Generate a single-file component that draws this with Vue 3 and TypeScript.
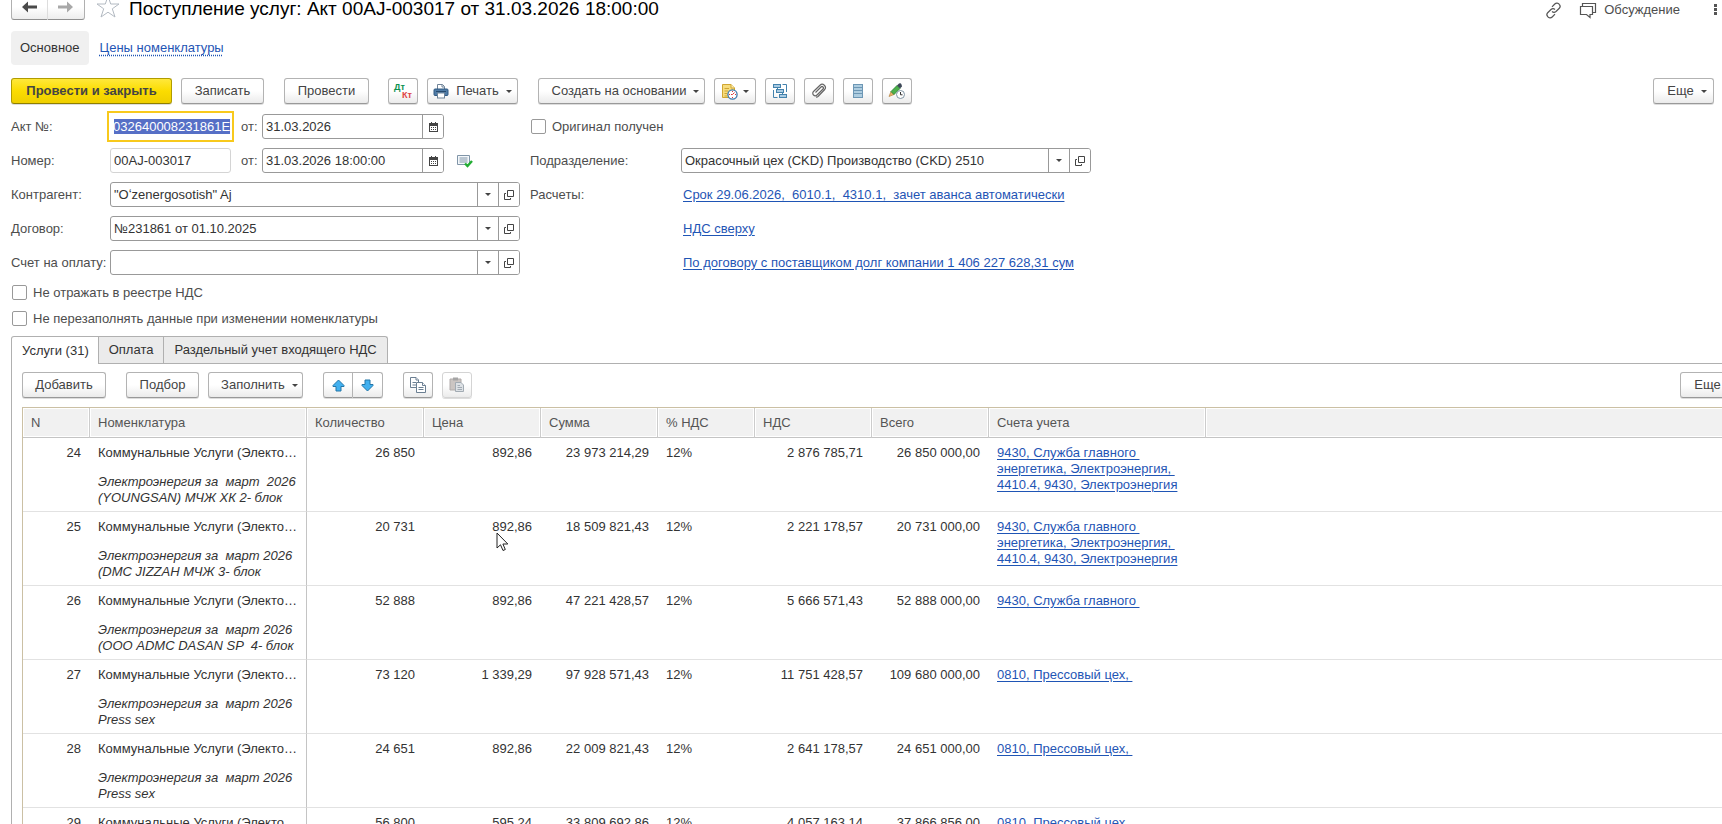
<script setup lang="ts">
import { onMounted, ref } from 'vue'

interface Row {
  n: number
  note: string[]
  qty: string
  price: string
  sum: string
  vat: string
  total: string
  accounts: string[]
}

const energyAccounts = ['9430, Служба главного ', 'энергетика, Электроэнергия, ', '4410.4, 9430, Электроэнергия']

const rows: Row[] = [
  { n: 24, note: ['Электроэнергия за  март  2026', '(YOUNGSAN) МЧЖ ХК 2- блок'], qty: '26 850', price: '892,86', sum: '23 973 214,29', vat: '2 876 785,71', total: '26 850 000,00', accounts: energyAccounts },
  { n: 25, note: ['Электроэнергия за  март 2026', '(DMC JIZZAH МЧЖ 3- блок'], qty: '20 731', price: '892,86', sum: '18 509 821,43', vat: '2 221 178,57', total: '20 731 000,00', accounts: energyAccounts },
  { n: 26, note: ['Электроэнергия за  март 2026', '(ООО ADMC DASAN SP  4- блок'], qty: '52 888', price: '892,86', sum: '47 221 428,57', vat: '5 666 571,43', total: '52 888 000,00', accounts: ['9430, Служба главного '] },
  { n: 27, note: ['Электроэнергия за  март 2026', 'Press sex'], qty: '73 120', price: '1 339,29', sum: '97 928 571,43', vat: '11 751 428,57', total: '109 680 000,00', accounts: ['0810, Прессовый цех, '] },
  { n: 28, note: ['Электроэнергия за  март 2026', 'Press sex'], qty: '24 651', price: '892,86', sum: '22 009 821,43', vat: '2 641 178,57', total: '24 651 000,00', accounts: ['0810, Прессовый цех, '] },
  { n: 29, note: ['Электроэнергия за  март 2026', 'Press sex'], qty: '56 800', price: '595,24', sum: '33 809 692,86', vat: '4 057 163,14', total: '37 866 856,00', accounts: ['0810, Прессовый цех, '] },
]

const actNumber = ref('032640008231861E')
const docNumber = ref('00AJ-003017')
const actDate = ref('31.03.2026')
const docDate = ref('31.03.2026 18:00:00')
const department = ref('Окрасочный цех (CKD) Производство (CKD) 2510')

const lookups = ref([
  { id: 'partner', label: 'Контрагент:', value: '"Oʻzenergosotish" Aj' },
  { id: 'contract', label: 'Договор:', value: '№231861 от 01.10.2025' },
  { id: 'invoice', label: 'Счет на оплату:', value: '' },
])
const links = [
  { label: 'Расчеты:', text: 'Срок 29.06.2026,  6010.1,  4310.1,  зачет аванса автоматически' },
  { label: '', text: 'НДС сверху' },
  { label: '', text: 'По договору с поставщиком долг компании 1 406 227 628,31 сум' },
]

const actInput = ref<HTMLInputElement | null>(null)
onMounted(() => {
  actInput.value?.focus()
  actInput.value?.select()
})
</script>

<template>
  <main class="page">
    <header class="head">
      <div class="nav">
        <button type="button" aria-label="Назад">
          <svg width="16" height="12" viewBox="0 0 16 12"><path d="M0 6 6 .5V4.500H15V7.500H6V11.500Z" fill="#4a4a4a" /></svg>
        </button>
        <button type="button" aria-label="Вперед">
          <svg width="16" height="12" viewBox="0 0 16 12"><path d="M15 6 9 .5V4.500H0V7.500H9V11.500Z" fill="#a8a8a8" /></svg>
        </button>
      </div>
      <button type="button" class="bare star" aria-label="Избранное">
        <svg width="24" height="24" viewBox="0 0 24 24"><path d="M12 0 14.700 8H23L16.300 12.800 19 21 12 16.200 5 21 7.700 12.800 1 8H9.300Z" fill="#fff" stroke="#b3bac2" /></svg>
      </button>
      <h1>Поступление услуг: Акт 00AJ-003017 от 31.03.2026 18:00:00</h1>
      <div class="head-right">
        <button type="button" class="bare" aria-label="Ссылка">
          <svg width="17" height="17" viewBox="0 0 17 17" fill="none" stroke="#555" stroke-width="1.200"><path d="M7 4.800 9.800 2a3 3 0 0 1 4.500.3 3 3 0 0 1 0 4L11 9.500a3 3 0 0 1-4 0M10 12.200 7.200 15a3 3 0 0 1-4.500-.3 3 3 0 0 1 0-4L6 7.500a3 3 0 0 1 4 0" /></svg>
        </button>
        <button type="button" class="bare talk">
          <svg width="18" height="17" viewBox="0 0 18 17" fill="none" stroke="#555" stroke-width="1.200"><path d="M1.500 4.500H13.500V12.500H11V15.500L7.500 12.500H1.500ZM3.500 4.500V1.500H16.500V10.500H13.500" /></svg>
          <span>Обсуждение</span>
        </button>
        <button type="button" class="bare dots" aria-label="Меню">
          <svg width="4" height="12" viewBox="0 0 4 12" fill="#555"><rect x="0" y="0" width="3" height="3" /><rect x="0" y="4" width="3" height="3" /><rect x="0" y="8" width="3" height="3" /></svg>
        </button>
      </div>
    </header>

    <nav class="sections">
      <span class="current">Основное</span>
      <a href="#prices">Цены номенклатуры</a>
    </nav>

    <div class="toolbar">
      <button type="button" class="btn primary">Провести и закрыть</button>
      <button type="button" class="btn save">Записать</button>
      <button type="button" class="btn post">Провести</button>
      <button type="button" class="btn icon" aria-label="Дт Кт"><span class="dtkt"><i>Дт</i><b>Кт</b></span></button>
      <button type="button" class="btn print">
        <svg width="16" height="16" viewBox="0 0 16 16"><path d="M4.500 6V1.500H9.500L11.500 3.500V6" fill="#fff" stroke="#6f8398" /><path d="M9 1.500V4H11.500" fill="none" stroke="#6f8398" /><rect x="1" y="6" width="14" height="6.500" rx="1" fill="#4f7ba6" stroke="#315a83" /><path d="M3 8.500H13" stroke="#274a6d" /><rect x="4.500" y="10" width="7" height="5" fill="#fff" stroke="#6f8398" /></svg>
        Печать<span class="caret"></span>
      </button>
      <button type="button" class="btn create">Создать на основании<span class="caret"></span></button>
      <button type="button" class="btn report" aria-label="Отчеты">
        <svg width="17" height="17" viewBox="0 0 17 17"><path d="M1.500 1.500H10L13.500 5V14.500H1.500Z" fill="#f6dc7e" stroke="#d0a632" /><path d="M10 1.500V5H13.500" fill="#fff0b8" stroke="#d0a632" /><path d="M3.500 5.500H8M3.500 8H7M3.500 10.500H6M3.500 13H6" stroke="#d0a632" /><circle cx="11.500" cy="11.500" r="4.600" fill="#fff" stroke="#3d78ad" stroke-width="1.300" /><path d="M11.500 8V9M14 11.500H15M11.500 14V15M8 11.500H9" stroke="#dd3b3b" fill="none" /><path d="M11.500 11.500 13.500 9.500M11.500 11.500H10" stroke="#dd3b3b" /></svg>
        <span class="caret"></span>
      </button>
      <button type="button" class="btn icon" aria-label="Структура">
        <svg width="16" height="16" viewBox="0 0 16 16" fill="#a9cbe2" stroke="#4382ad"><rect x="1.500" y="1.500" width="7" height="3" /><rect x="4.500" y="6.500" width="7" height="3" /><rect x="7.500" y="11.500" width="7" height="3" /><path d="M10.500 1.500H14.500V9M1.500 7V14.500H5.500M5.500 4.500V6.500M10.500 9.500V11.500" fill="none" /></svg>
      </button>
      <button type="button" class="btn icon" aria-label="Файлы">
        <svg width="16" height="16" viewBox="0 0 16 16" fill="none" stroke="#666" stroke-width="1.200"><path d="M4.500 9.500 10 4a1.300 1.300 0 0 1 2 2L6 12a2.400 2.400 0 0 1-3.500-3.500L9 2.200a3.200 3.200 0 0 1 4.700 4.300L7.500 13a3.200 3.200 0 0 1-2.500 1.200" /></svg>
      </button>
      <button type="button" class="btn icon" aria-label="Реестр">
        <svg width="12" height="16" viewBox="0 0 12 16"><rect x="1.500" y="1.500" width="9" height="13" fill="#aecde0" stroke="#6d97b5" /><path d="M2 4.500H10M2 7.500H10M2 10.500H10" stroke="#6d97b5" /></svg>
      </button>
      <button type="button" class="btn icon" aria-label="История">
        <svg width="18" height="18" viewBox="0 0 18 18"><path d="M1 14.500 3 9.500 6 12.500Z" fill="#e9b36a" stroke="#a9732f" stroke-width=".6" /><path d="M3 9.500 9 3.500 12 6.500 6 12.500Z" fill="#4cb04c" stroke="#25802b" stroke-width=".8" /><path d="M9 3.500 11 1.500Q13 .8 13.500 2.500T14 4.500L12 6.500Z" fill="#3e4858" /><circle cx="12.500" cy="12.500" r="4" fill="#fff" stroke="#7f94a3" /><path d="M12.500 10V12.800H14.500" fill="none" stroke="#333" /></svg>
      </button>
      <button type="button" class="btn more">Еще<span class="caret"></span></button>
    </div>

    <form class="fields" @submit.prevent>
      <label for="act">Акт №:</label>
      <div class="pair">
        <input id="act" ref="actInput" v-model="actNumber" class="box active" type="text" />
        <label for="act-date">от:</label>
        <div class="box combo date">
          <input id="act-date" v-model="actDate" type="text" />
          <button type="button" aria-label="Календарь"><svg width="9" height="10" viewBox="0 0 9 10"><path d="M0 1H9V10H0ZM1 4V9H8V4Z" fill="#444" fill-rule="evenodd" /><path d="M2.500 0V2M6.500 0V2" stroke="#444" /><path d="M2 5.500H7M2 7.500H7" stroke="#444" stroke-dasharray="1 1" /></svg></button>
        </div>
      </div>
      <label class="check wide"><input type="checkbox" />Оригинал получен</label>

      <label for="num">Номер:</label>
      <div class="pair">
        <input id="num" v-model="docNumber" class="box quiet" type="text" />
        <label for="doc-date">от:</label>
        <div class="box combo date">
          <input id="doc-date" v-model="docDate" type="text" />
          <button type="button" aria-label="Календарь"><svg width="9" height="10" viewBox="0 0 9 10"><path d="M0 1H9V10H0ZM1 4V9H8V4Z" fill="#444" fill-rule="evenodd" /><path d="M2.500 0V2M6.500 0V2" stroke="#444" /><path d="M2 5.500H7M2 7.500H7" stroke="#444" stroke-dasharray="1 1" /></svg></button>
        </div>
        <svg class="posted" width="16" height="14" viewBox="0 0 16 14"><path d="M.5 1.500H12.500V10.500H.5Z" fill="#f4f8fb" stroke="#8095a8" /><path d="M2.500 4H10.500M2.500 6H10.500M2.500 8H10.500" stroke="#8095a8" /><path d="M8 9.500 10.500 12 15 7" fill="none" stroke="#22ad33" stroke-width="2.400" /></svg>
      </div>
      <label for="dept">Подразделение:</label>
      <div class="box combo">
        <input id="dept" v-model="department" type="text" />
        <button type="button" aria-label="Выбрать"><span class="caret"></span></button>
        <button type="button" aria-label="Открыть"><svg width="10" height="10" viewBox="0 0 10 10" fill="none" stroke="#444"><path d="M3.500.5H9.500V6.500H3.500ZM2 3.500H.5V9.500H6.500V8" /></svg></button>
      </div>

      <template v-for="(f, i) in lookups" :key="f.id">
        <label :for="f.id">{{ f.label }}</label>
        <div class="box combo">
          <input :id="f.id" v-model="f.value" type="text" />
          <button type="button" aria-label="Выбрать"><span class="caret"></span></button>
          <button type="button" aria-label="Открыть"><svg width="10" height="10" viewBox="0 0 10 10" fill="none" stroke="#444"><path d="M3.500.5H9.500V6.500H3.500ZM2 3.500H.5V9.500H6.500V8" /></svg></button>
        </div>
        <span>{{ links[i].label }}</span>
        <a class="value-link" href="#details">{{ links[i].text }}</a>
      </template>
    </form>

    <div class="flags">
      <label class="check"><input type="checkbox" />Не отражать в реестре НДС</label>
      <label class="check"><input type="checkbox" />Не перезаполнять данные при изменении номенклатуры</label>
    </div>

    <div class="tabs" role="tablist">
      <button type="button" role="tab" aria-selected="true" class="on">Услуги (31)</button>
      <button type="button" role="tab" aria-selected="false">Оплата</button>
      <button type="button" role="tab" aria-selected="false">Раздельный учет входящего НДС</button>
    </div>

    <section class="panel">
      <div class="toolbar">
        <button type="button" class="btn add">Добавить</button>
        <button type="button" class="btn pick">Подбор</button>
        <button type="button" class="btn fill">Заполнить<span class="caret"></span></button>
        <div class="moves">
          <button type="button" class="btn" aria-label="Вверх"><svg width="13" height="13" viewBox="0 0 13 13"><path d="M6.500 1 12 6.500V7.500H9V12H4V7.500H1V6.500Z" fill="#42b0ef" stroke="#2276a8" /></svg></button>
          <button type="button" class="btn" aria-label="Вниз"><svg width="13" height="13" viewBox="0 0 13 13"><path d="M6.500 12 12 6.500V5.500H9V1H4V5.500H1V6.500Z" fill="#42b0ef" stroke="#2276a8" /></svg></button>
        </div>
        <button type="button" class="btn icon copy" aria-label="Копировать"><svg width="16" height="16" viewBox="0 0 16 16" fill="#fff" stroke="#6b7f92"><path d="M.5.5H6L8.500 3V10.500H.5Z" /><path d="M6 .5V3H8.500M2.500 5.500H6M2.500 8H6" /><path d="M6.500 5.500H12.500L15.500 8.500V15.500H6.500Z" /><path d="M12.500 5.500V8.500H15.500M8.500 10.500H13.500M8.500 12.500H13.500" /></svg></button>
        <button type="button" class="btn icon paste" aria-label="Вставить" disabled><svg width="16" height="16" viewBox="0 0 16 16"><path d="M1 2H12V13H1Z" fill="#cbc5c2" stroke="#b0abaa" /><rect x="4" y=".5" width="5" height="3" fill="#a5a5a5" /><path d="M6.500 5.500H12L14.500 8V14.500H6.500Z" fill="#dde1e5" stroke="#a2abb3" /><path d="M8.500 8.500H11M8.500 10.500H13M8.500 12.500H13" stroke="#a2abb3" /></svg></button>
        <button type="button" class="btn more">Еще<span class="caret"></span></button>
      </div>

      <table>
        <colgroup><col class="c-n" /><col class="c-name" /><col class="c-num" /><col class="c-num" /><col class="c-num" /><col class="c-rate" /><col class="c-num" /><col class="c-num" /><col class="c-acc" /><col /></colgroup>
        <thead>
          <tr><th>N</th><th>Номенклатура</th><th>Количество</th><th>Цена</th><th>Сумма</th><th>% НДС</th><th>НДС</th><th>Всего</th><th>Счета учета</th><th></th></tr>
        </thead>
        <tbody>
          <tr v-for="r in rows" :key="r.n">
            <td class="num">{{ r.n }}</td>
            <td class="name">
              <div>Коммунальные Услуги (Электо…</div>
              <div class="note"><div v-for="line in r.note" :key="line">{{ line }}</div></div>
            </td>
            <td class="num">{{ r.qty }}</td>
            <td class="num">{{ r.price }}</td>
            <td class="num">{{ r.sum }}</td>
            <td>12%</td>
            <td class="num">{{ r.vat }}</td>
            <td class="num">{{ r.total }}</td>
            <td><a v-for="line in r.accounts" :key="line" href="#accounts">{{ line }}</a></td>
            <td></td>
          </tr>
        </tbody>
      </table>
    </section>

    <svg class="pointer" width="13" height="20" viewBox="0 0 13 20"><path d="M1 1V16L4.500 12.800 7 18.500 9.300 17.500 6.900 12H11.800Z" fill="#fff" stroke="#222" /></svg>
  </main>
</template>

<style>
body { margin: 0; background: #fff; overflow: hidden; }
</style>

<style scoped>
* { box-sizing: border-box; }
.page {
  position: relative;
  height: 100vh;
  overflow: hidden;
  padding-left: 11px;
  font: 13px/16px "Liberation Sans", Arial, sans-serif;
  color: #4d4d4d;
}
button, input { font: inherit; color: inherit; margin: 0; }
button { cursor: pointer; }
svg { display: block; flex: none; }
a { color: #1f55b5; text-underline-offset: 2px; }

.head { display: flex; height: 20px; align-items: flex-end; }
.nav { display: flex; flex: none; }
.nav button {
  display: flex; align-items: center; justify-content: center;
  width: 37px; height: 26px; padding: 0;
  border: 1px solid #b0b0b0; border-bottom-color: #8f8f8f; border-radius: 0 0 3px 0;
  background: linear-gradient(#fff 50%, #ededed);
}
.nav button:first-child { border-right-color: #ddd; border-radius: 0 0 0 3px; }
.nav button + button { border-left: 0; }
.bare { display: flex; align-items: center; border: 0; padding: 0; background: none; }
.star { margin-left: 11px; }
h1 { margin: 0 0 0 9px; font: 19px/22px "Liberation Sans", Arial, sans-serif; color: #000; white-space: nowrap; }
.head-right { display: flex; align-items: center; margin-left: auto; height: 20px; }
.talk { margin-left: 17px; gap: 7px; }
.dots { margin-left: 34px; margin-right: 4px; }

.sections { display: flex; align-items: center; height: 34px; margin-top: 11px; gap: 11px; }
.current { padding: 9px; border-radius: 4px; background: #f0f0f0; color: #333; }
.sections a { text-decoration: underline dotted; text-underline-offset: 3px; }

.toolbar { display: flex; height: 26px; }
.page > .toolbar { margin: 13px 8px 0 0; }
.btn {
  display: flex; flex: none; align-items: center; justify-content: center;
  height: 26px; padding: 0;
  border: 1px solid #b3b3b3; border-bottom-color: #999; border-radius: 3px;
  background: linear-gradient(#fff 50%, #ebebeb);
  box-shadow: 0 1px 0 #ddd;
  color: #444; white-space: nowrap;
}
.caret { width: 0; border: 3px solid transparent; border-top-color: #444; border-bottom: 0; }
.btn .caret { margin-left: 7px; }
.primary { width: 161px; border-color: #b09c00; border-bottom-color: #8f7f00; background: linear-gradient(#ffe83b, #fbdc00 50%, #efcf00); font-weight: bold; }
.save { width: 83px; margin-left: 9px; }
.post { width: 85px; margin-left: 20px; }
.icon { width: 30px; margin-left: 9px; }
.post + .icon { margin-left: 19px; }
.print { width: 91px; margin-left: 9px; gap: 7px; }
.print .caret { margin-left: 0; }
.create { width: 167px; margin-left: 20px; padding-left: 8px; }
.report { width: 42px; margin-left: 9px; }
.report .caret { margin-left: 5px; }
.more { width: 61px; margin-left: auto; padding-left: 7px; }
.dtkt { display: grid; width: 18px; font-size: 9px; line-height: 8px; font-weight: bold; }
.dtkt i { font-style: normal; text-align: left; color: #0a9150; }
.dtkt b { text-align: right; color: #e04545; }

.fields {
  display: grid;
  grid-template-columns: 99px 410px 161px 410px;
  grid-auto-rows: 25px;
  row-gap: 9px;
  margin-top: 10px;
  align-items: center;
  white-space: nowrap;
}
.fields > span, .fields > label[for="dept"] { padding-left: 10px; }
.fields > .check { padding-left: 11px; }
.wide { grid-column: span 2; }
.pair { display: flex; align-items: center; }
.pair label { width: 31px; padding-left: 10px; }
.box {
  height: 25px; border: 1px solid #999; border-radius: 3px; background: #fff; color: #333;
}
input.box { width: 121px; padding: 0 0 0 3px; }
input.quiet { border-color: #d4d4d4; }
input.active { border-color: #fff; border-radius: 0; outline: 2px solid #f8c91c; outline-offset: 1px; }
input.active::selection { background: #566fc6; color: #fff; }
.combo { display: flex; overflow: hidden; }
.combo input { flex: 1; min-width: 0; border: 0; padding: 0 3px; outline: 0; background: none; }
.combo button {
  display: flex; align-items: center; justify-content: center;
  width: 21px; padding: 0; border: 0; border-left: 1px solid #999; background: #fff;
}
.date { width: 182px; }
.posted { margin-left: 13px; }
.value-link { padding-left: 2px; white-space: pre; justify-self: start; }

.check { display: flex; align-items: center; gap: 6px; }
.check input { appearance: none; width: 15px; height: 15px; border: 1px solid #999; border-radius: 2px; background: #fff; }
.flags { display: grid; gap: 11px; margin: 10px 0 0 1px; }
.flags .check { height: 15px; }

.tabs { display: flex; margin-top: 10px; }
.tabs button {
  height: 27px; padding: 0 10px; border: 1px solid #b0b0b0; border-left: 0; border-bottom: 0;
  background: #ebebeb; color: #333; white-space: nowrap;
}
.tabs .on { position: relative; height: 28px; margin-bottom: -1px; padding-right: 9px; border-left: 1px solid #b0b0b0; border-radius: 3px 0 0 0; background: #fff; }
.tabs button:last-child { border-radius: 0 3px 0 0; }
.panel { margin-right: -30px; padding: 8px 10px 0; border: 1px solid #b0b0b0; border-bottom: 0; }
.add { width: 84px; }
.pick { width: 73px; margin-left: 20px; }
.fill { width: 95px; margin-left: 9px; padding-left: 8px; }
.moves { display: flex; margin-left: 20px; }
.moves .btn { width: 30px; border-radius: 3px 0 0 3px; }
.moves .btn + .btn { border-left: 0; border-radius: 0 3px 3px 0; }
.copy { margin-left: 20px; }
.paste { border-color: #d4d4d4; }

table { width: 100%; margin-top: 9px; border-collapse: separate; border-spacing: 0; table-layout: fixed; border: 1px solid #cbc0a4; border-right: 0; border-bottom: 0; }
.c-n { width: 67px; }
.c-name { width: 217px; }
.c-num { width: 117px; }
.c-rate { width: 97px; }
.c-acc { width: 217px; }
th {
  height: 30px; padding: 0 8px; text-align: left; font-weight: normal; color: #555;
  background: #f1f1f1; border-right: 1px solid #ccc; border-bottom: 1px solid #c4c4c4;
  box-shadow: inset 0 0 0 1px #fff;
}
td { height: 74px; padding: 7px 8px 0; vertical-align: top; border-bottom: 1px solid #e2e2e2; color: #333; white-space: pre; }
td a { display: table; }
.num { text-align: right; padding-right: 9px; }
.name { border-right: 1px solid #c4c4c4; padding-right: 6px; }
.note { margin-top: 13px; font-style: italic; }

.pointer { position: absolute; left: 496px; top: 532px; }
</style>
